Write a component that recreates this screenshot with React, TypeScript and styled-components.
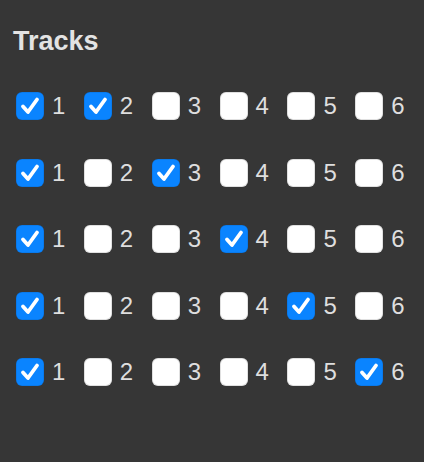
import React from 'react';
import styled, { createGlobalStyle } from 'styled-components';

const GlobalStyle = createGlobalStyle`
  html, body {
    margin: 0;
    padding: 0;
    background: #363636;
  }
`;

const Panel = styled.div`
  width: 424px;
  height: 462px;
  box-sizing: border-box;
  padding: 28px 16px 0;
  background: #363636;
  font-family: 'Liberation Sans', Arial, sans-serif;
`;

const Title = styled.h2`
  margin: 0 0 37px -3px;
  font-size: 27px;
  line-height: 27px;
  font-weight: 700;
  color: #e3e3e3;
`;

const Rows = styled.div`
  display: flex;
  flex-direction: column;
  gap: 38.5px;
`;

const Row = styled.div`
  display: flex;
  align-items: center;
  gap: 18.5px;
`;

const Item = styled.label`
  display: flex;
  align-items: center;
  gap: 8px;
  font-size: 24px;
  line-height: 28px;
  color: #dedede;
`;

const Box = styled.span<{ $checked: boolean }>`
  width: 28px;
  height: 28px;
  box-sizing: border-box;
  border-radius: 6px;
  display: flex;
  align-items: center;
  justify-content: center;
  background: ${({ $checked }) => ($checked ? '#0a84ff' : '#ffffff')};
  box-shadow: ${({ $checked }) =>
    $checked ? 'inset 0 0 0 0.5px rgba(0,0,0,0.15)' : 'inset 0 0 0 1px rgba(0,0,0,0.12)'};
`;

const Check = () => (
  <svg width="24" height="24" viewBox="0 0 24 24">
    <path
      d="M5 12.5 L10 18 L19 5.5"
      fill="none"
      stroke="#fff"
      strokeWidth="3.8"
      strokeLinecap="round"
      strokeLinejoin="round"
    />
  </svg>
);

const tracks = [1, 2, 3, 4, 5, 6];

const App: React.FC = () => {
  return <>
    <GlobalStyle />
    <Panel>
      <Title>Tracks</Title>
      <Rows>
        {[2, 3, 4, 5, 6].map((on) => (
          <Row key={on}>
            {tracks.map((n) => {
              const checked = n === 1 || n === on;
              return (
                <Item key={n}>
                  <Box $checked={checked}>{checked && <Check />}</Box>
                  {n}
                </Item>
              );
            })}
          </Row>
        ))}
      </Rows>
    </Panel>
  </>;
};

export default App;
